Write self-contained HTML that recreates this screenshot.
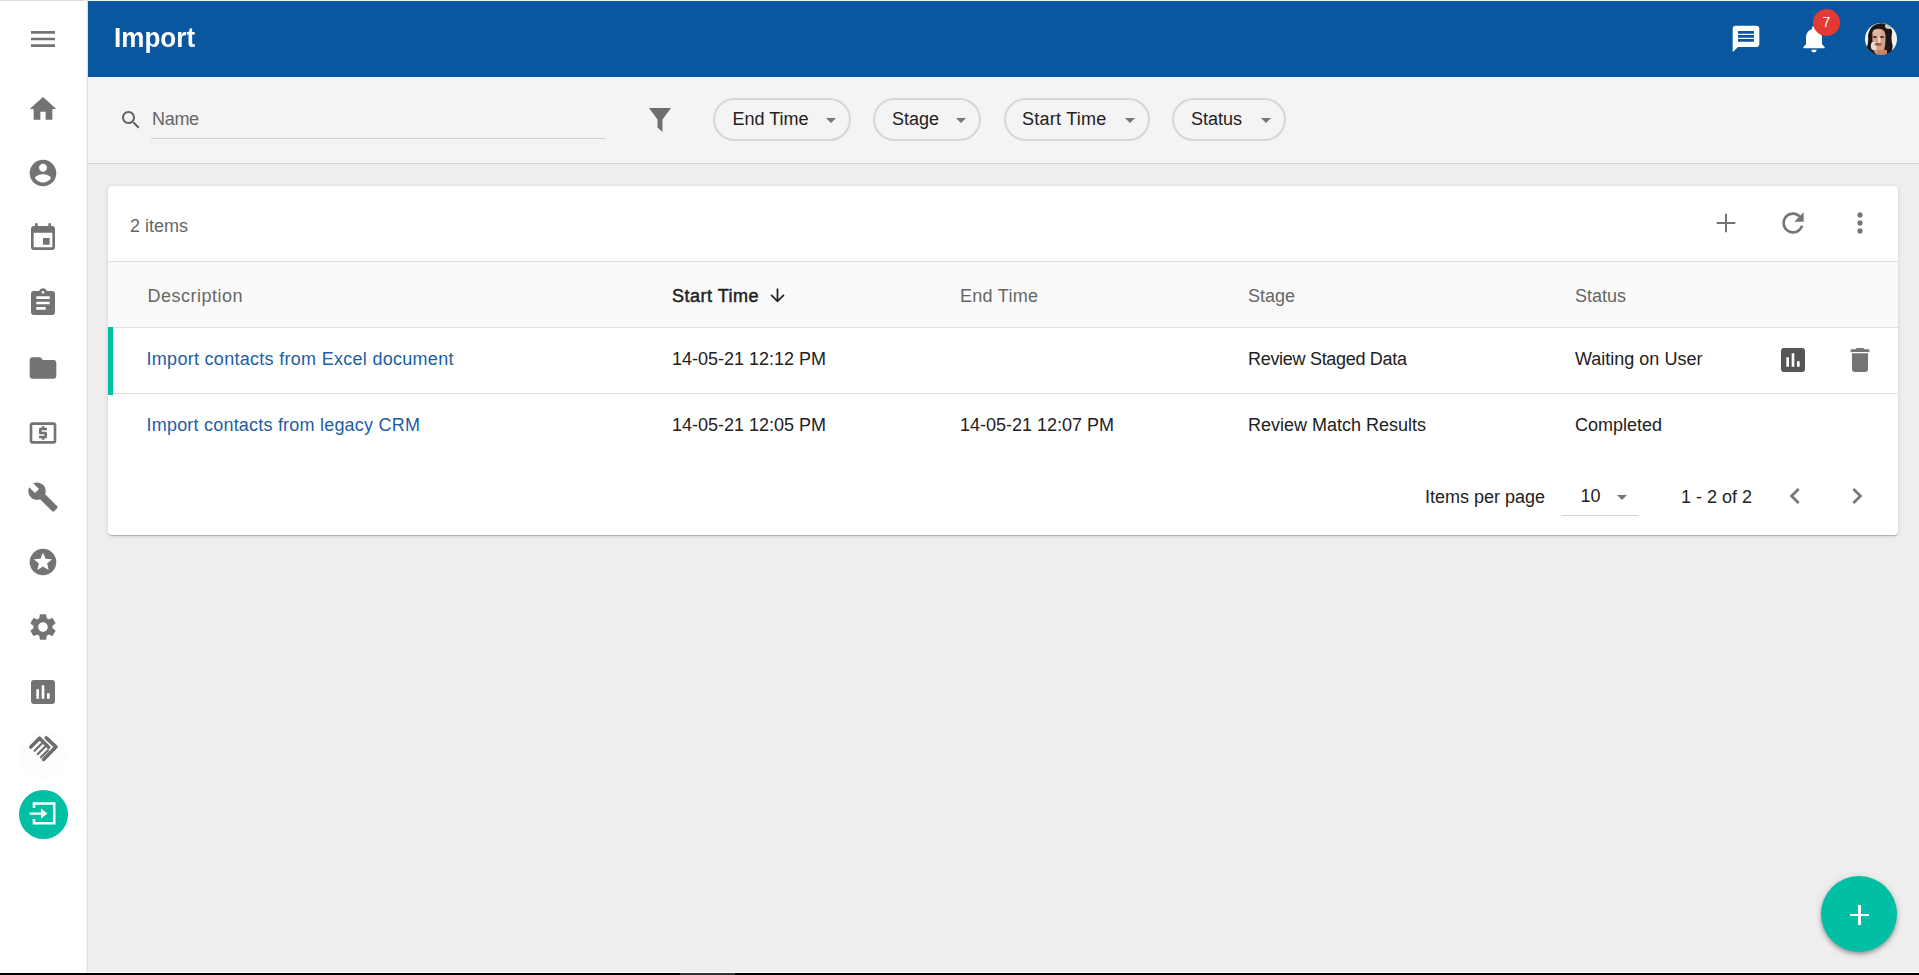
<!DOCTYPE html>
<html><head><meta charset="utf-8">
<style>
*{margin:0;padding:0;box-sizing:border-box}
html,body{width:1919px;height:975px;overflow:hidden}
body{position:relative;background:#eeeeee;font-family:"Liberation Sans",sans-serif;color:#212121}
.a{position:absolute}
.t{position:absolute;font-size:18px;line-height:20px;white-space:nowrap}
svg.i{position:absolute;width:32px;height:32px}
#side{left:0;top:0;width:88px;height:975px;background:#fff;border-right:1px solid #e0e0e0}
#topline{left:0;top:0;width:88px;height:1px;background:#d9dbe0}
#topline2{left:88px;top:0;width:1831px;height:1px;background:#f3f0ee}
#hdr{left:88px;top:1px;width:1831px;height:76px;background:#09579e}
#fbar{left:88px;top:77px;width:1831px;height:87px;background:#f4f4f4;border-bottom:1px solid #d4d4d4;border-top:1px solid #fbfbfb}
.chip{position:absolute;top:98px;height:43px;border:2px solid #d6d6d6;border-radius:22px}
.caret{position:absolute;width:0;height:0;border-left:5px solid transparent;border-right:5px solid transparent;border-top:5px solid #757575}
#card{left:108px;top:186px;width:1790px;height:349px;background:#fff;border-radius:4px;box-shadow:0 2px 1px -1px rgba(0,0,0,.12),0 1px 1px 0 rgba(0,0,0,.1),0 1px 4px 0 rgba(0,0,0,.12)}
.hl{position:absolute;height:1px;background:#e0e0e0}
.gray{color:#666}
.link{color:#1b5ea4}
</style></head><body>

<!-- sidebar -->
<div id="side" class="a"></div>
<div id="topline" class="a"></div>
<div class="a" style="left:85px;top:0;width:2px;height:975px;background:linear-gradient(to right,#fdfdfd,#f5f5f5)"></div>
<div id="topline2" class="a"></div>

<svg class="i" style="left:27px;top:23px" viewBox="0 0 24 24"><path fill="#737373" d="M3 18h18v-2H3v2zm0-5h18v-2H3v2zm0-7v2h18V6H3z"/></svg>
<svg class="i" style="left:27px;top:92.6px" viewBox="0 0 24 24"><path fill="#737373" d="M10 20v-6h4v6h5v-8h3L12 3 2 12h3v8z"/></svg>
<svg class="i" style="left:27px;top:157px" viewBox="0 0 24 24"><path fill="#737373" d="M12 2C6.48 2 2 6.48 2 12s4.48 10 10 10 10-4.48 10-10S17.52 2 12 2zm0 3c1.66 0 3 1.34 3 3s-1.34 3-3 3-3-1.34-3-3 1.34-3 3-3zm0 14.2c-2.5 0-4.71-1.28-6-3.22.03-1.99 4-3.08 6-3.08 1.99 0 5.97 1.09 6 3.08-1.29 1.94-3.5 3.22-6 3.22z"/></svg>
<svg class="i" style="left:27px;top:221.7px" viewBox="0 0 24 24"><path fill="#737373" d="M17 12h-5v5h5v-5zM16 1v2H8V1H6v2H5c-1.11 0-1.99.9-1.99 2L3 19c0 1.1.89 2 2 2h14c1.1 0 2-.9 2-2V5c0-1.1-.9-2-2-2h-1V1h-2zm3 18H5V8h14v11z"/></svg>
<svg class="i" style="left:27px;top:287.2px" viewBox="0 0 24 24"><path fill="#737373" d="M19 3h-4.18C14.4 1.84 13.3 1 12 1c-1.3 0-2.4.84-2.82 2H5c-1.1 0-2 .9-2 2v14c0 1.1.9 2 2 2h14c1.1 0 2-.9 2-2V5c0-1.1-.9-2-2-2zm-7 0c.55 0 1 .45 1 1s-.45 1-1 1-1-.45-1-1 .45-1 1-1zm2 14H7v-2h7v2zm3-4H7v-2h10v2zm0-4H7V7h10v2z"/></svg>
<svg class="i" style="left:27px;top:351.8px" viewBox="0 0 24 24"><path fill="#737373" d="M10 4H4c-1.1 0-1.99.9-1.99 2L2 18c0 1.1.9 2 2 2h16c1.1 0 2-.9 2-2V8c0-1.1-.9-2-2-2h-8l-2-2z"/></svg>
<svg class="i" style="left:27px;top:416.9px" viewBox="0 0 24 24"><path fill="#737373" d="M11 17h2v-1h1c.55 0 1-.45 1-1v-3c0-.55-.45-1-1-1h-3v-1h4V8h-2V7h-2v1h-1c-.55 0-1 .45-1 1v3c0 .55.45 1 1 1h3v1H9v2h2v1zm9-13H4c-1.11 0-1.99.89-1.99 2L2 18c0 1.11.89 2 2 2h16c1.11 0 2-.89 2-2V6c0-1.11-.89-2-2-2zm0 14H4V6h16v12z"/></svg>
<svg class="i" style="left:26.8px;top:481px" viewBox="0 0 24 24"><path fill="#737373" d="M22.7 19l-9.1-9.1c.9-2.3.4-5-1.5-6.9-2-2-5-2.4-7.4-1.3L9 6 6 9 1.6 4.7C.4 7.1.9 10.1 2.9 12.1c1.9 1.9 4.6 2.4 6.9 1.5l9.1 9.1c.4.4 1 .4 1.4 0l2.3-2.3c.5-.4.5-1.1.1-1.4z"/></svg>
<svg class="i" style="left:27px;top:545.9px" viewBox="0 0 24 24"><path fill="#737373" d="M11.99 2C6.47 2 2 6.48 2 12s4.47 10 9.99 10C17.52 22 22 17.52 22 12S17.52 2 11.99 2zm4.24 16L12 15.45 7.77 18l1.12-4.81-3.73-3.23 4.92-.42L12 5l1.92 4.53 4.92.42-3.73 3.23L16.23 18z"/></svg>
<svg class="i" style="left:27px;top:611px" viewBox="0 0 24 24"><path fill="#737373" d="M19.14 12.94c.04-.3.06-.61.06-.94 0-.32-.02-.64-.07-.94l2.03-1.58c.18-.14.23-.41.12-.61l-1.92-3.32c-.12-.22-.37-.29-.59-.22l-2.39.96c-.5-.38-1.03-.7-1.62-.94l-.36-2.54c-.04-.24-.24-.41-.48-.41h-3.84c-.24 0-.43.17-.47.41l-.36 2.54c-.59.24-1.13.57-1.62.94l-2.39-.96c-.22-.08-.47 0-.59.22L2.74 8.87c-.12.21-.08.47.12.61l2.03 1.58c-.05.3-.09.63-.09.94s.02.64.07.94l-2.03 1.58c-.18.14-.23.41-.12.61l1.92 3.32c.12.22.37.29.59.22l2.39-.96c.5.38 1.03.7 1.62.94l.36 2.54c.05.24.24.41.48.41h3.84c.24 0 .44-.17.47-.41l.36-2.54c.59-.24 1.13-.56 1.62-.94l2.39.96c.22.08.47 0 .59-.22l1.92-3.32c.12-.22.07-.47-.12-.61l-2.01-1.58zM12 15.6c-1.98 0-3.6-1.62-3.6-3.6s1.62-3.6 3.6-3.6 3.6 1.62 3.6 3.6-1.62 3.6-3.6 3.6z"/></svg>
<svg class="i" style="left:27px;top:676.3px" viewBox="0 0 24 24"><path fill="#737373" d="M19 3H5c-1.1 0-2 .9-2 2v14c0 1.1.9 2 2 2h14c1.1 0 2-.9 2-2V5c0-1.1-.9-2-2-2zM9 17H7v-7h2v7zm4 0h-2V7h2v10zm4 0h-2v-4h2v4z"/></svg>
<!-- logo -->
<svg class="a" style="left:0;top:700px" width="88" height="90" viewBox="0 700 88 90">
 <circle cx="43" cy="755" r="24" fill="#fdfdfd"/>
 <g fill="none" stroke="#6d6d6d" stroke-linecap="round" stroke-linejoin="round">
  <path stroke-width="3.6" d="M30.8 747 L39.6 738.2 L48.6 747.2"/>
  <path stroke-width="3.6" d="M46.2 737.8 L56 746.8 L43.6 759.4"/>
  <path stroke-width="2.2" d="M34.6 750.8 L41.6 743.8 M37.8 754 L44.8 747 M41 757.2 L48 750.2"/>
 </g>
</svg>
<!-- active import -->
<div class="a" style="left:18.5px;top:789.5px;width:49.5px;height:49.5px;border-radius:50%;background:#00bfa5"></div>
<svg class="a" style="left:0;top:780px" width="88" height="60" viewBox="0 780 88 60">
 <path fill="none" stroke="#fff" stroke-width="2.6" d="M34 808 V803.5 H54.2 V823.3 H34 V819"/>
 <path fill="#fff" d="M29.6 812.4 H41 V808.6 L47.4 813.6 L41 818.6 V814.8 H29.6 Z"/>
</svg>

<!-- header -->
<div id="hdr" class="a"></div>
<div class="a" style="left:114px;top:23px;font-size:27px;line-height:30px;font-weight:bold;color:#fff;white-space:nowrap;transform:scaleX(0.965);transform-origin:0 0">Import</div>
<svg class="i" style="left:1730px;top:23.1px" viewBox="0 0 24 24"><path fill="#fff" d="M20 2H4c-1.1 0-1.99.9-1.99 2L2 22l4-4h14c1.1 0 2-.9 2-2V4c0-1.1-.9-2-2-2zm-2 12H6v-2h12v2zm0-3H6V9h12v2zm0-3H6V6h12v2z"/></svg>
<svg class="i" style="left:1797.5px;top:23px" viewBox="0 0 24 24"><path fill="#fff" d="M12 22c1.1 0 2-.9 2-2h-4c0 1.1.89 2 2 2zm6-6v-5c0-3.07-1.64-5.64-4.5-6.32V4c0-.83-.67-1.5-1.5-1.5s-1.5.67-1.5 1.5v.68C7.63 5.36 6 7.92 6 11v5l-2 2v1h16v-1l-2-2z"/></svg>
<div class="a" style="left:1813px;top:9px;width:27px;height:27px;border-radius:50%;background:#e53a33;color:#fff;font-size:14px;line-height:27px;text-align:center">7</div>
<svg class="a" style="left:1865px;top:23px" width="32" height="32" viewBox="0 0 32 32">
 <defs><clipPath id="av"><circle cx="16" cy="16" r="16"/></clipPath><filter id="bl" x="-10%" y="-10%" width="120%" height="120%"><feGaussianBlur stdDeviation="0.55"/></filter></defs>
 <g clip-path="url(#av)"><g filter="url(#bl)">
  <rect x="-2" y="-2" width="36" height="36" fill="#f2f0ee"/>
  <path fill="#1f1613" d="M2 32 C1.5 22 2 10 6 5 C9 1 16 -1 21 1 C26 3 28 8 28 16 C28 24 27 29 25 33 Z"/>
  <ellipse cx="24" cy="3" rx="4" ry="3" fill="#cfc6be"/>
  <ellipse cx="30.5" cy="15" rx="4" ry="10" fill="#f3f1ef"/>
  <ellipse cx="0.6" cy="16" rx="2.6" ry="9" fill="#f4f2f0"/>
  <path fill="#d7a08a" d="M7.5 10 C8 6 12 5.5 15.5 6 C19 6.5 20.5 9 20.5 14 C20.5 20 20 26 18 30 C16 33 12 33 10 30 C8 26 7 18 7.5 10 Z"/>
  <ellipse cx="12" cy="10" rx="4.5" ry="3.5" fill="#e3b6a3"/>
  <ellipse cx="8.8" cy="23" rx="3" ry="4.2" fill="#eadcd5"/>
  <ellipse cx="9.9" cy="14" rx="1.9" ry="1.1" fill="#3d2b25"/>
  <ellipse cx="17" cy="14" rx="2.2" ry="1.1" fill="#4a2d25"/>
  <ellipse cx="14.3" cy="17" rx="1.2" ry="3.4" fill="#f1dbcd"/>
  <ellipse cx="13.2" cy="21.4" rx="3.6" ry="1.3" fill="#a2584a"/>
  <rect x="12" y="27" width="10" height="6" fill="#c98466"/>
 </g></g>
</svg>

<!-- filter bar -->
<div id="fbar" class="a"></div>
<svg class="a" style="left:119px;top:108px" width="24" height="24" viewBox="0 0 24 24"><path fill="#666" d="M15.5 14h-.79l-.28-.27C15.41 12.59 16 11.11 16 9.5 16 5.91 13.09 3 9.5 3S3 5.91 3 9.5 5.91 16 9.5 16c1.61 0 3.09-.59 4.23-1.57l.27.28v.79l5 4.99L20.49 19l-4.99-5zm-6 0C7.01 14 5 11.99 5 9.5S7.01 5 9.5 5 14 7.01 14 9.5 11.99 14 9.5 14z"/></svg>
<div class="t gray" style="left:152px;top:109px;letter-spacing:-0.3px">Name</div>
<div class="a" style="left:151px;top:138px;width:454px;height:1px;background:#cfcfcf"></div>
<svg class="a" style="left:640px;top:100px" width="40" height="40" viewBox="640 100 40 40"><path fill="#6f6f6f" d="M649 108 H671 L662.5 119.5 V132 L657.5 127.5 V119.5 Z"/></svg>

<div class="chip" style="left:713px;width:138px"></div>
<div class="t" style="left:732.5px;top:109px">End Time</div>
<div class="caret" style="left:826px;top:118px"></div>
<div class="chip" style="left:872.5px;width:108px"></div>
<div class="t" style="left:892px;top:109px">Stage</div>
<div class="caret" style="left:956px;top:118px"></div>
<div class="chip" style="left:1003.5px;width:146px"></div>
<div class="t" style="left:1022px;top:109px;letter-spacing:0.25px">Start Time</div>
<div class="caret" style="left:1125px;top:118px"></div>
<div class="chip" style="left:1172px;width:113.5px"></div>
<div class="t" style="left:1191px;top:109px">Status</div>
<div class="caret" style="left:1261px;top:118px"></div>

<!-- card -->
<div id="card" class="a"></div>
<div class="t gray" style="left:130px;top:216px">2 items</div>
<svg class="i" style="left:1710px;top:207px" viewBox="0 0 24 24"><path fill="#757575" d="M19 12.75h-6.25V19h-1.5v-6.25H5v-1.5h6.25V5h1.5v6.25H19z"/></svg>
<svg class="i" style="left:1777px;top:207px" viewBox="0 0 24 24"><path fill="#757575" d="M17.65 6.35C16.2 4.9 14.21 4 12 4c-4.42 0-7.99 3.58-7.99 8s3.57 8 7.99 8c3.73 0 6.84-2.55 7.73-6h-2.08c-.82 2.33-3.04 4-5.65 4-3.31 0-6-2.69-6-6s2.69-6 6-6c1.66 0 3.14.69 4.22 1.78L13 11h7V4l-2.35 2.35z"/></svg>
<svg class="i" style="left:1844.1px;top:207px" viewBox="0 0 24 24"><path fill="#757575" d="M12 8c1.1 0 2-.9 2-2s-.9-2-2-2-2 .9-2 2 .9 2 2 2zm0 2c-1.1 0-2 .9-2 2s.9 2 2 2 2-.9 2-2-.9-2-2-2zm0 6c-1.1 0-2 .9-2 2s.9 2 2 2 2-.9 2-2-.9-2-2-2z"/></svg>

<div class="hl" style="left:108px;top:261px;width:1790px"></div>
<div class="a" style="left:108px;top:262px;width:1790px;height:65px;background:#fafafa"></div>
<div class="hl" style="left:108px;top:327px;width:1790px"></div>
<div class="t gray" style="left:147.5px;top:286px;letter-spacing:0.5px">Description</div>
<div class="t" style="left:672px;top:286px;letter-spacing:0.5px;-webkit-text-stroke:0.45px #212121">Start Time</div>
<svg class="a" style="left:766.5px;top:284.5px" width="21" height="21" viewBox="0 0 24 24"><path fill="#212121" d="M20 12l-1.41-1.41L13 16.17V4h-2v12.17l-5.58-5.59L4 12l8 8 8-8z"/></svg>
<div class="t gray" style="left:960px;top:286px;letter-spacing:0.28px">End Time</div>
<div class="t gray" style="left:1248px;top:286px">Stage</div>
<div class="t gray" style="left:1575px;top:286px">Status</div>

<div class="a" style="left:108px;top:327px;width:5px;height:68px;background:#00bfa5"></div>
<div class="t link" style="left:146.5px;top:349px;letter-spacing:0.29px">Import contacts from Excel document</div>
<div class="t" style="left:672px;top:349px">14-05-21 12:12 PM</div>
<div class="t" style="left:1248px;top:349px;letter-spacing:-0.3px">Review Staged Data</div>
<div class="t" style="left:1575px;top:349px">Waiting on User</div>
<svg class="i" style="left:1777px;top:344px" viewBox="0 0 24 24"><path fill="#555" d="M19 3H5c-1.1 0-2 .9-2 2v14c0 1.1.9 2 2 2h14c1.1 0 2-.9 2-2V5c0-1.1-.9-2-2-2zM9 17H7v-7h2v7zm4 0h-2V7h2v10zm4 0h-2v-4h2v4z"/></svg>
<svg class="i" style="left:1843.8px;top:344px" viewBox="0 0 24 24"><path fill="#757575" d="M6 19c0 1.1.9 2 2 2h8c1.1 0 2-.9 2-2V7H6v12zM19 4h-3.5l-1-1h-5l-1 1H5v2h14V4z"/></svg>
<div class="hl" style="left:113px;top:393px;width:1785px"></div>

<div class="t link" style="left:146.5px;top:415px;letter-spacing:0.21px">Import contacts from legacy CRM</div>
<div class="t" style="left:672px;top:415px">14-05-21 12:05 PM</div>
<div class="t" style="left:960px;top:415px">14-05-21 12:07 PM</div>
<div class="t" style="left:1248px;top:415px">Review Match Results</div>
<div class="t" style="left:1575px;top:415px">Completed</div>

<!-- paginator -->
<div class="t" style="left:1425px;top:486.5px">Items per page</div>
<div class="t" style="left:1580.5px;top:486px">10</div>
<div class="caret" style="left:1617px;top:495px"></div>
<div class="a" style="left:1562px;top:515px;width:76px;height:1px;background:#d0d0d0"></div>
<div class="t" style="left:1681px;top:487px">1 - 2 of 2</div>
<svg class="i" style="left:1778.6px;top:480px" viewBox="0 0 24 24"><path fill="#757575" d="M15.41 7.41L14 6l-6 6 6 6 1.41-1.41L10.83 12z"/></svg>
<svg class="i" style="left:1840.5px;top:480px" viewBox="0 0 24 24"><path fill="#757575" d="M10 6L8.59 7.41 13.17 12l-4.58 4.59L10 18l6-6z"/></svg>

<!-- FAB -->
<div class="a" style="left:1821px;top:876px;width:76px;height:76px;border-radius:50%;background:#00bfa5;box-shadow:0 2px 4px -1px rgba(0,0,0,.25),0 3px 5px 0 rgba(0,0,0,.16),0 1px 8px 0 rgba(0,0,0,.1)"></div>
<div class="a" style="left:1850px;top:913.5px;width:19px;height:2.6px;background:#fff"></div>
<div class="a" style="left:1858px;top:905px;width:2.6px;height:19.6px;background:#fff"></div>

<!-- bottom bar -->
<div class="a" style="left:0;top:972px;width:1919px;height:1px;background:#fff"></div>
<div class="a" style="left:0;top:973px;width:1919px;height:2px;background:#000"></div>
<div class="a" style="left:680px;top:973px;width:55px;height:2px;background:#333"></div>
</body></html>
